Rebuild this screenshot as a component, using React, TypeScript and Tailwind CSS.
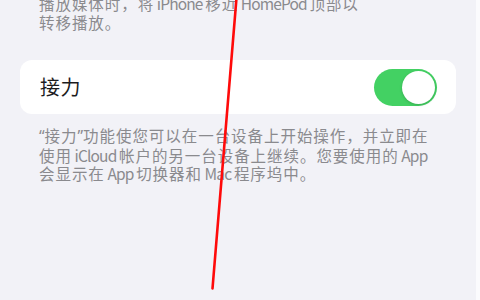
import React from "react";

function L({ children }: { children: React.ReactNode }) {
  return <span className="tracking-[-0.85px]">{children}</span>;
}

export default function App() {
  const font = { fontFamily: '"Noto Sans CJK SC", "Noto Sans", sans-serif' };
  const q = "font-['Noto_Sans',sans-serif] tracking-normal";
  return (
    <div className="relative w-[480px] h-[300px] overflow-hidden flex" style={font}>
      <div className="flex-1 bg-[#f2f2f7] flex flex-col">
        <p className="mt-[-6px] pl-[39px] pr-[20px] text-[15.5px] leading-[18.5px] tracking-[0.95px] text-[#8a8a8e] whitespace-nowrap">
          播放媒体时，将<L> iPhone </L>移近<L> HomePod </L>顶部以
          <br />
          转移播放。
        </p>
        <div className="mt-[29px] mx-[20px] h-[54px] bg-white rounded-[12px] flex items-center justify-between pl-[20px] pr-[19px]">
          <span className="text-[20px] text-[#1c1c1e] leading-none tracking-[0.5px]">接力</span>
          <div className="w-[63px] h-[37px] rounded-full bg-[#43d163] flex items-center justify-end p-[2px]">
            <div className="w-[33px] h-[33px] rounded-full bg-white shadow-[0_1px_3px_rgba(0,0,0,0.18)]" />
          </div>
        </div>
        <p className="mt-[12px] pl-[39px] pr-[4px] text-[15.5px] leading-[18.5px] tracking-[0.95px] text-[#8a8a8e] whitespace-nowrap">
          <span className={q}>“</span>接力<span className={q}>”</span>功能使您可以在一台设备上开始操作，并立即在
          <br />
          使用<L> iCloud </L>帐户的另一台设备上继续。您要使用的<L> App</L>
          <br />
          会显示在<L> App </L>切换器和<L> Mac </L>程序坞中。
        </p>
      </div>
      <div className="w-[4px] bg-[#fbfbfd]" />
      <svg className="absolute inset-0 pointer-events-none" width="480" height="300" viewBox="0 0 480 300">
        <line x1="236.5" y1="-2" x2="212.5" y2="288.5" stroke="#ff0a0a" strokeWidth="2.6" strokeLinecap="round" />
      </svg>
    </div>
  );
}
